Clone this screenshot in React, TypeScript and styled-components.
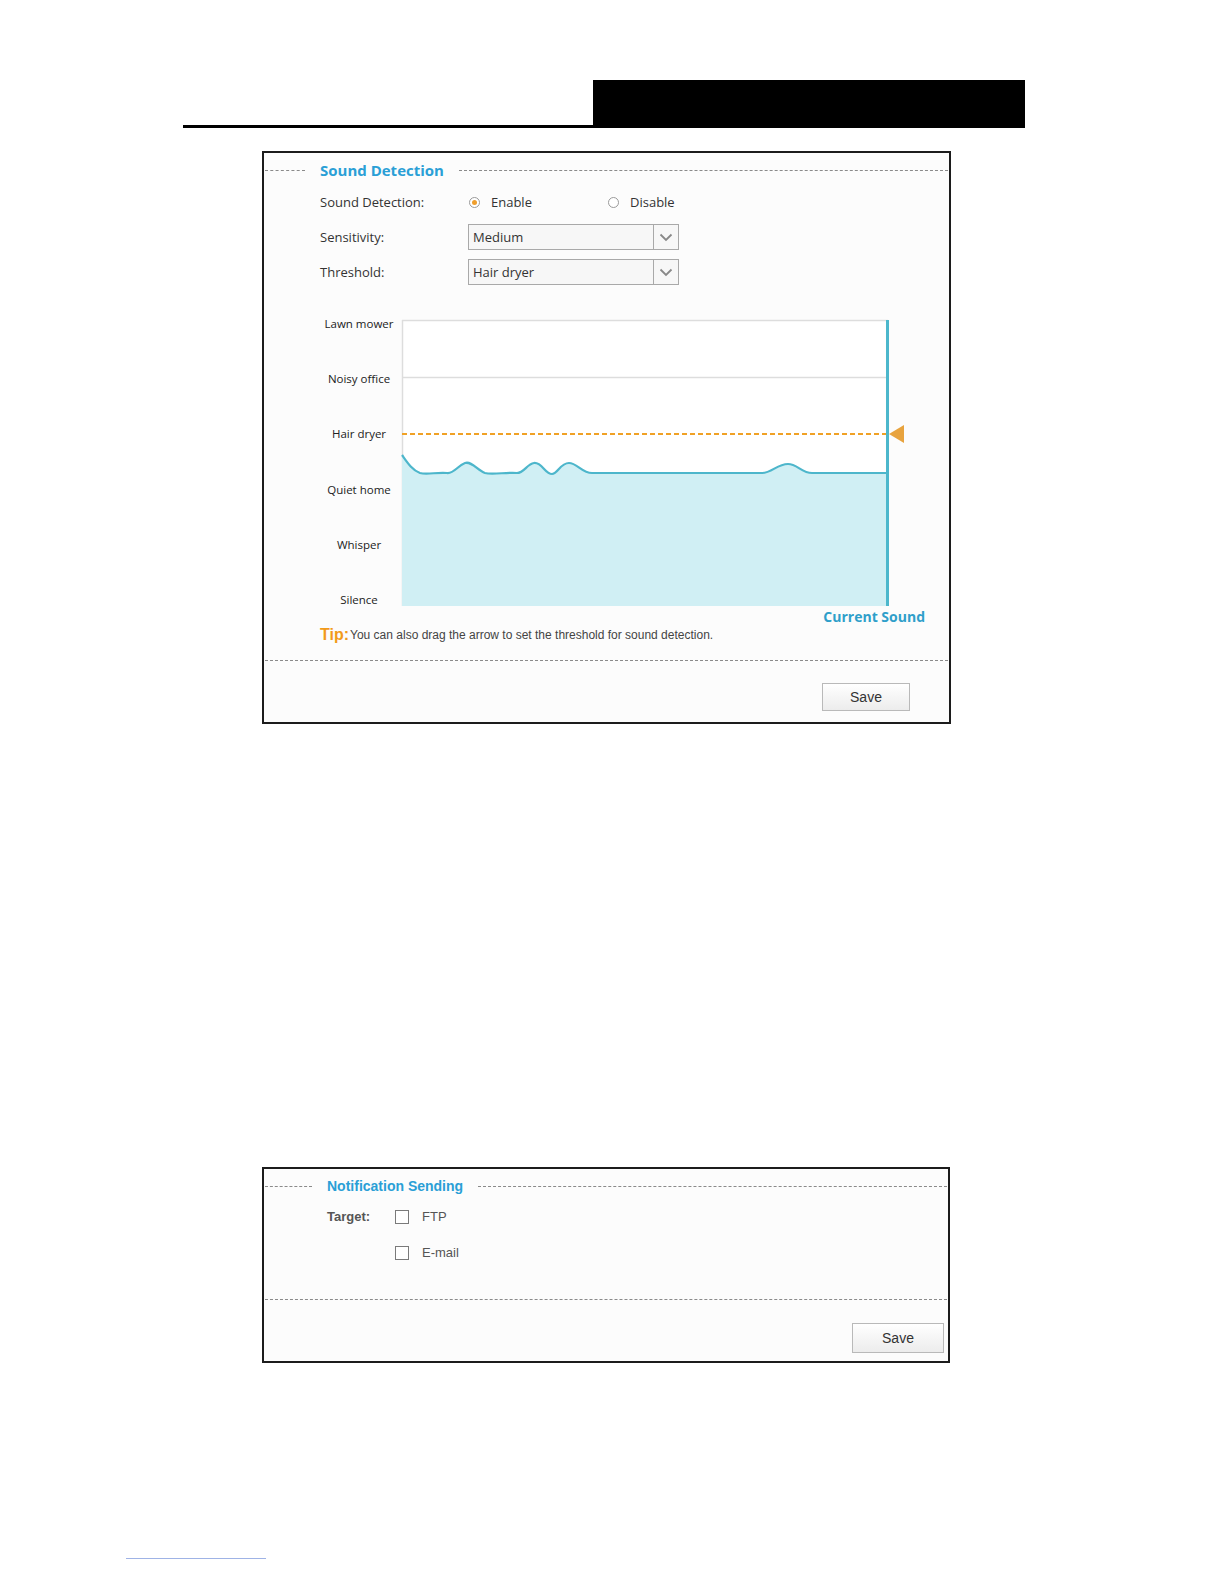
import React from 'react';
import styled, { createGlobalStyle } from 'styled-components';

const GlobalStyle = createGlobalStyle`
  html, body {
    margin: 0;
    padding: 0;
    background: #ffffff;
    overflow: hidden;
  }
  * {
    box-sizing: border-box;
  }
`;

const Page = styled.div`
  width: 100%;
  height: 1580px;
  padding-top: 80px;
  background: #ffffff;
`;

const Header = styled.div`
  display: flex;
  align-items: flex-end;
  width: 842px;
  margin-left: 183px;
`;

const HeaderRule = styled.div`
  flex: 1;
  height: 3px;
  background: #000000;
`;

const HeaderBlock = styled.div`
  width: 432px;
  height: 48px;
  background: #000000;
`;

const Panel = styled.div<{ $top: number; $width: number; $height: number }>`
  width: ${(p) => p.$width}px;
  height: ${(p) => p.$height}px;
  margin-top: ${(p) => p.$top}px;
  margin-left: 262px;
  border: 2px solid #1c1c1c;
  background: #fcfcfc;
  display: flex;
  flex-direction: column;
`;

const Legend = styled.div<{ $lead: number; $gap: number }>`
  display: flex;
  align-items: center;
  height: 18px;
  margin-top: 8px;
  padding: 0 1px;

  &::before {
    content: '';
    width: ${(p) => p.$lead}px;
    border-top: 1px dashed #8a8a8a;
    margin-right: ${(p) => p.$gap}px;
  }

  &::after {
    content: '';
    flex: 1;
    border-top: 1px dashed #8a8a8a;
    margin-left: ${(p) => p.$gap}px;
  }
`;

const LegendTitle = styled.span<{ $font: string; $size: number }>`
  font-family: ${(p) => p.$font};
  font-size: ${(p) => p.$size}px;
  font-weight: 700;
  color: #2a9fd6;
  white-space: nowrap;
`;

const FormArea = styled.div`
  padding-left: 56px;
  font-family: 'Open Sans', 'DejaVu Sans', sans-serif;
  font-size: 13px;
  color: #333333;
`;

const FormRow = styled.div<{ $top: number; $height: number }>`
  display: flex;
  align-items: center;
  height: ${(p) => p.$height}px;
  margin-top: ${(p) => p.$top}px;
`;

const FieldLabel = styled.div`
  width: 148px;
`;

const RadioOption = styled.label<{ $width?: number }>`
  display: flex;
  align-items: center;
  width: ${(p) => (p.$width ? `${p.$width}px` : 'auto')};
  gap: 11px;
`;

const RadioDot = styled.span<{ $checked?: boolean }>`
  position: relative;
  width: 11px;
  height: 11px;
  margin-left: 1px;
  border-radius: 50%;
  border: 1px solid #9a9a9a;
  background: #ffffff;

  &::after {
    content: '';
    display: ${(p) => (p.$checked ? 'block' : 'none')};
    position: absolute;
    left: 2px;
    top: 2px;
    width: 5px;
    height: 5px;
    border-radius: 50%;
    background: #ef9e2c;
  }
`;

const Select = styled.div`
  display: flex;
  width: 211px;
  height: 26px;
  border: 1px solid #a9a9a9;
  background: #f7f7f7;
`;

const SelectValue = styled.div`
  flex: 1;
  display: flex;
  align-items: center;
  padding-left: 4px;
  color: #333333;
`;

const SelectArrow = styled.div`
  width: 25px;
  display: flex;
  align-items: center;
  justify-content: center;
  border-left: 1px solid #a9a9a9;
`;

const ChartRow = styled.div`
  display: flex;
  margin-top: 31px;
  padding-left: 54px;
`;

const AxisLabels = styled.div`
  width: 82px;
  height: 292px;
  display: flex;
  flex-direction: column;
  justify-content: space-between;
  font-family: 'Open Sans', 'DejaVu Sans', sans-serif;
  font-size: 11.5px;
  line-height: 16px;
  color: #222222;
  text-align: center;
`;

const ChartSvg = styled.svg`
  display: block;
  margin-top: 2px;
`;

const CurrentSound = styled.div`
  align-self: flex-end;
  margin-right: 24px;
  font-family: 'Open Sans', 'DejaVu Sans', sans-serif;
  font-size: 14px;
  font-weight: 700;
  line-height: 18px;
  color: #2f9fca;
`;

const Tip = styled.div`
  padding-left: 56px;
  height: 18px;
  display: flex;
  align-items: center;
  font-family: 'Liberation Sans', Arial, sans-serif;
  font-size: 12px;
  color: #444444;
`;

const TipMark = styled.span`
  font-size: 16px;
  font-weight: 700;
  color: #f29a1a;
  margin-right: 1px;
`;

const Divider = styled.div<{ $top: number }>`
  margin: ${(p) => p.$top}px 1px 0;
  border-top: 1px dashed #8a8a8a;
`;

const ButtonBar = styled.div<{ $top: number; $right: number }>`
  display: flex;
  justify-content: flex-end;
  margin-top: ${(p) => p.$top}px;
  padding-right: ${(p) => p.$right}px;
`;

const SaveButton = styled.button<{ $w: number; $h: number }>`
  width: ${(p) => p.$w}px;
  height: ${(p) => p.$h}px;
  border: 1px solid #b9b9b9;
  background: linear-gradient(#ffffff, #ececec);
  font-family: 'Liberation Sans', Arial, sans-serif;
  font-size: 14px;
  color: #333333;
  padding: 0;
`;

const NotifyArea = styled.div`
  padding-left: 63px;
  font-family: 'Liberation Sans', Arial, sans-serif;
  font-size: 13px;
  color: #555555;
`;

const TargetRow = styled.div<{ $top: number }>`
  display: flex;
  align-items: center;
  height: 18px;
  margin-top: ${(p) => p.$top}px;
`;

const TargetLabel = styled.div`
  width: 68px;
  font-weight: 700;
`;

const CheckBox = styled.span`
  width: 14px;
  height: 14px;
  border: 1px solid #7a7a7a;
  background: #ffffff;
  margin-right: 13px;
  margin-top: 2px;
`;

const FooterLink = styled.div`
  width: 140px;
  margin-left: 126px;
  margin-top: 195px;
  border-top: 1px solid #9fb3e6;
`;

const Chevron = () => (
  <svg width="14" height="9" viewBox="0 0 14 9">
    <polyline points="1.5,1.5 7,7 12.5,1.5" fill="none" stroke="#888888" strokeWidth="1.8" />
  </svg>
);

const wavePath =
  'M400,455 C405,462 410,470 418,473 C425,475 435,472 445,473 C452,474 455,466 463,463 ' +
  'C470,461 475,470 483,473 C490,475 505,472 515,473 C522,473 525,464 532,463 ' +
  'C540,462 543,474 550,474 C556,474 558,463 567,463 C575,463 580,473 590,473 ' +
  'L760,473 C770,473 775,464 786,464 C795,464 800,473 810,473 L885,473';

const SoundChart = () => (
  <ChartSvg width="508" height="290" viewBox="398 318 508 290">
    <rect x="400" y="320" width="486" height="286" fill="#ffffff" />
    <line x1="400" y1="320.5" x2="886" y2="320.5" stroke="#dddddd" strokeWidth="1.5" />
    <line x1="400" y1="377.5" x2="886" y2="377.5" stroke="#dddddd" strokeWidth="1.5" />
    <line x1="400.5" y1="320" x2="400.5" y2="606" stroke="#dddddd" strokeWidth="1.5" />
    <path d={`${wavePath} L885,606 L400,606 Z`} fill="#d0eff4" />
    <path d={wavePath} fill="none" stroke="#4db6cb" strokeWidth="2.2" />
    <line x1="400" y1="434" x2="885" y2="434" stroke="#f0a125" strokeWidth="2" strokeDasharray="5 3" />
    <rect x="884" y="320" width="3" height="286" fill="#4cb7cc" />
    <polygon points="887,434 902,425 902,443" fill="#e8a33e" />
  </ChartSvg>
);

const levels = ['Lawn mower', 'Noisy office', 'Hair dryer', 'Quiet home', 'Whisper', 'Silence'];

const App: React.FC = () => {
  return (
    <Page>
      <GlobalStyle />
      <Header>
        <HeaderRule />
        <HeaderBlock />
      </Header>

      <Panel $top={23} $width={689} $height={573}>
        <Legend $lead={40} $gap={15}>
          <LegendTitle $font="'Open Sans', 'DejaVu Sans', sans-serif" $size={15}>
            Sound Detection
          </LegendTitle>
        </Legend>

        <FormArea>
          <FormRow $top={13} $height={20}>
            <FieldLabel>Sound Detection:</FieldLabel>
            <RadioOption $width={139}>
              <RadioDot $checked />
              Enable
            </RadioOption>
            <RadioOption>
              <RadioDot />
              Disable
            </RadioOption>
          </FormRow>
          <FormRow $top={12} $height={26}>
            <FieldLabel>Sensitivity:</FieldLabel>
            <Select>
              <SelectValue>Medium</SelectValue>
              <SelectArrow>
                <Chevron />
              </SelectArrow>
            </Select>
          </FormRow>
          <FormRow $top={9} $height={26}>
            <FieldLabel>Threshold:</FieldLabel>
            <Select>
              <SelectValue>Hair dryer</SelectValue>
              <SelectArrow>
                <Chevron />
              </SelectArrow>
            </Select>
          </FormRow>
        </FormArea>

        <ChartRow>
          <AxisLabels>
            {levels.map((l) => (
              <div key={l}>{l}</div>
            ))}
          </AxisLabels>
          <SoundChart />
        </ChartRow>

        <CurrentSound>Current Sound</CurrentSound>

        <Tip>
          <TipMark>Tip:</TipMark>
          You can also drag the arrow to set the threshold for sound detection.
        </Tip>

        <Divider $top={16} />

        <ButtonBar $top={22} $right={39}>
          <SaveButton $w={88} $h={28}>Save</SaveButton>
        </ButtonBar>
      </Panel>

      <Panel $top={443} $width={688} $height={196}>
        <Legend $lead={47} $gap={15}>
          <LegendTitle $font="'Liberation Sans', Arial, sans-serif" $size={14}>
            Notification Sending
          </LegendTitle>
        </Legend>

        <NotifyArea>
          <TargetRow $top={12}>
            <TargetLabel>Target:</TargetLabel>
            <CheckBox />
            FTP
          </TargetRow>
          <TargetRow $top={18}>
            <TargetLabel />
            <CheckBox />
            E-mail
          </TargetRow>
        </NotifyArea>

        <Divider $top={38} />

        <ButtonBar $top={23} $right={4}>
          <SaveButton $w={92} $h={30}>Save</SaveButton>
        </ButtonBar>
      </Panel>

      <FooterLink />
    </Page>
  );
};

export default App;
